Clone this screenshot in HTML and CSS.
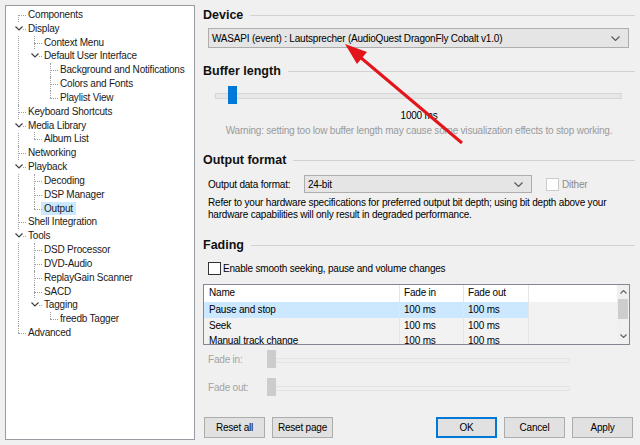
FILE: index.html
```html
<!DOCTYPE html>
<html lang="en">
<head>
    <meta charset="UTF-8">
    <meta name="viewport" content="width=device-width, initial-scale=1.0">
    <title>Preferences: Output</title>
    <link rel="stylesheet" href="styles.css">
</head>
<body>
    <div class="window">
        <div class="tree-box">
            <ul class="tree">
                <li><span class="label">Components</span></li>
                <li><span class="caret"><svg width="8" height="5" viewBox="0 0 8 5"><polyline points="0.5,0.5 4,4 7.5,0.5"/></svg></span><span class="label">Display</span>
                    <ul>
                        <li><span class="label">Context Menu</span></li>
                        <li><span class="caret"><svg width="8" height="5" viewBox="0 0 8 5"><polyline points="0.5,0.5 4,4 7.5,0.5"/></svg></span><span class="label">Default User Interface</span>
                            <ul>
                                <li><span class="label">Background and Notifications</span></li>
                                <li><span class="label">Colors and Fonts</span></li>
                                <li><span class="label">Playlist View</span></li>
                            </ul>
                        </li>
                    </ul>
                </li>
                <li><span class="label">Keyboard Shortcuts</span></li>
                <li><span class="caret"><svg width="8" height="5" viewBox="0 0 8 5"><polyline points="0.5,0.5 4,4 7.5,0.5"/></svg></span><span class="label">Media Library</span>
                    <ul>
                        <li><span class="label">Album List</span></li>
                    </ul>
                </li>
                <li><span class="label">Networking</span></li>
                <li><span class="caret"><svg width="8" height="5" viewBox="0 0 8 5"><polyline points="0.5,0.5 4,4 7.5,0.5"/></svg></span><span class="label">Playback</span>
                    <ul>
                        <li><span class="label">Decoding</span></li>
                        <li><span class="label">DSP Manager</span></li>
                        <li><span class="label selected">Output</span></li>
                    </ul>
                </li>
                <li><span class="label">Shell Integration</span></li>
                <li><span class="caret"><svg width="8" height="5" viewBox="0 0 8 5"><polyline points="0.5,0.5 4,4 7.5,0.5"/></svg></span><span class="label">Tools</span>
                    <ul>
                        <li><span class="label">DSD Processor</span></li>
                        <li><span class="label">DVD-Audio</span></li>
                        <li><span class="label">ReplayGain Scanner</span></li>
                        <li><span class="label">SACD</span></li>
                        <li><span class="caret"><svg width="8" height="5" viewBox="0 0 8 5"><polyline points="0.5,0.5 4,4 7.5,0.5"/></svg></span><span class="label">Tagging</span>
                            <ul>
                                <li><span class="label">freedb Tagger</span></li>
                            </ul>
                        </li>
                    </ul>
                </li>
                <li><span class="label">Advanced</span></li>
            </ul>
        </div>

        <div class="pane">
            <h2 class="heading">Device</h2>
            <div class="combo device-combo">
                <span class="combo-text">WASAPI (event) : Lautsprecher (AudioQuest DragonFly Cobalt v1.0)</span>
                <svg class="chev" width="9" height="5" viewBox="0 0 9 5"><polyline points="0.5,0.5 4.5,4.5 8.5,0.5"/></svg>
            </div>

            <h2 class="heading buffer-heading">Buffer length</h2>
            <div class="slider buffer-slider">
                <div class="thumb"></div>
            </div>
            <p class="buffer-value">1000 ms</p>
            <p class="warning">Warning: setting too low buffer length may cause some visualization effects to stop working.</p>

            <h2 class="heading format-heading">Output format</h2>
            <div class="format-row">
                <span class="format-label">Output data format:</span>
                <div class="combo format-combo">
                    <span class="combo-text">24-bit</span>
                    <svg class="chev" width="9" height="5" viewBox="0 0 9 5"><polyline points="0.5,0.5 4.5,4.5 8.5,0.5"/></svg>
                </div>
                <span class="check disabled"></span>
                <span class="dither">Dither</span>
            </div>
            <p class="refer">Refer to your hardware specifications for preferred output bit depth; using bit depth above your hardware capabilities will only result in degraded performance.</p>

            <h2 class="heading fading-heading">Fading</h2>
            <div class="check-row">
                <span class="check"></span>
                <span>Enable smooth seeking, pause and volume changes</span>
            </div>

            <div class="list">
                <div class="list-body">
                    <div class="list-row list-head">
                        <span class="cell">Name</span>
                        <span class="cell">Fade in</span>
                        <span class="cell">Fade out</span>
                        <span class="cell rest"></span>
                    </div>
                    <div class="list-row active">
                        <span class="cell">Pause and stop</span>
                        <span class="cell">100 ms</span>
                        <span class="cell">100 ms</span>
                        <span class="cell rest"></span>
                    </div>
                    <div class="list-row">
                        <span class="cell">Seek</span>
                        <span class="cell">100 ms</span>
                        <span class="cell">100 ms</span>
                        <span class="cell rest"></span>
                    </div>
                    <div class="list-row">
                        <span class="cell">Manual track change</span>
                        <span class="cell">100 ms</span>
                        <span class="cell">100 ms</span>
                        <span class="cell rest"></span>
                    </div>
                </div>
                <div class="scrollbar">
                    <svg width="7" height="4" viewBox="0 0 7 4"><polyline points="0.5,3.5 3.5,0.5 6.5,3.5"/></svg>
                    <div class="scroll-thumb"></div>
                    <div class="scroll-space"></div>
                    <svg width="7" height="4" viewBox="0 0 7 4"><polyline points="0.5,0.5 3.5,3.5 6.5,0.5"/></svg>
                </div>
            </div>

            <div class="fade-row">
                <span class="fade-label">Fade in:</span>
                <div class="slider fade-slider"><div class="thumb"></div></div>
            </div>
            <div class="fade-row fade-out">
                <span class="fade-label">Fade out:</span>
                <div class="slider fade-slider"><div class="thumb"></div></div>
            </div>

            <div class="buttons">
                <button class="btn">Reset all</button>
                <button class="btn">Reset page</button>
                <span class="spacer"></span>
                <button class="btn default">OK</button>
                <button class="btn">Cancel</button>
                <button class="btn">Apply</button>
            </div>
        </div>

        <svg class="arrow" width="640" height="445" viewBox="0 0 640 445">
            <line x1="462" y1="143" x2="360" y2="57" />
            <polygon points="345,44 367,52 357,64" />
        </svg>
    </div>
</body>
</html>
```

FILE: styles.css
```css
* {
    box-sizing: border-box;
}
html, body {
    margin: 0;
    padding: 0;
}
body {
    background-color: #f0f0f0;
    font-family: "Liberation Sans", Arial, sans-serif;
    font-size: 10px;
    letter-spacing: -0.2px;
    color: #000;
}
.window {
    position: relative;
    display: flex;
    width: 640px;
    height: 445px;
    overflow: hidden;
}

/* tree on the left */
.tree-box {
    margin: 5px 0 0 5px;
    width: 190px;
    height: 435px;
    background-color: #fff;
    border: 1px solid #9a9aa2;
}
.tree, .tree ul {
    list-style: none;
    margin: 0;
    padding: 0;
}
.tree {
    padding-top: 2px;
}
.tree ul {
    margin-left: -6px;
}
.tree li {
    position: relative;
    padding-left: 22px;
    line-height: 13.83px;
}
.tree li::before {
    content: "";
    position: absolute;
    left: 12px;
    top: 0;
    bottom: 0;
    border-left: 1px dotted #a0a0a0;
}
.tree > li:first-child::before {
    top: 7px;
}
.tree li:last-child::before {
    bottom: auto;
    height: 7px;
}
.tree li::after {
    content: "";
    position: absolute;
    left: 12px;
    top: 7px;
    width: 8px;
    border-top: 1px dotted #a0a0a0;
}
.caret {
    position: absolute;
    left: 8px;
    top: 0;
    width: 9px;
    height: 13px;
    background-color: #fff;
    display: flex;
    align-items: center;
    justify-content: center;
    z-index: 1;
}
.caret svg polyline {
    fill: none;
    stroke: #404040;
    stroke-width: 1.2;
}
.label {
    display: inline-block;
    white-space: nowrap;
    color: #1a1a1a;
}
.label.selected {
    background-color: #cce8ff;
    padding: 0 3px;
    margin-left: -3px;
}

/* settings pane */
.pane {
    margin-left: 8px;
    width: 432px;
    padding-top: 6px;
}
.heading {
    display: flex;
    align-items: center;
    height: 18px;
    margin: 0;
    font-size: 12.5px;
    font-weight: bold;
    letter-spacing: 0;
    color: #111;
}
.heading::after {
    content: "";
    flex: 1;
    border-top: 1px solid #d2d2d2;
    margin-left: 7px;
}
.combo {
    display: flex;
    align-items: center;
    background-color: #e5e5e5;
    border: 1px solid #adadad;
    padding: 0 8px 0 3px;
}
.combo-text {
    flex: 1;
    white-space: nowrap;
}
.chev polyline {
    fill: none;
    stroke: #555;
    stroke-width: 1.1;
}
.device-combo {
    margin: 4px 6px 0 5px;
    height: 20px;
}
.buffer-heading {
    margin-top: 14px;
}
.slider {
    position: relative;
    height: 18px;
}
.slider::before {
    content: "";
    position: absolute;
    left: 0;
    right: 0;
    top: 7px;
    height: 4px;
    background-color: #e7e7e7;
    border: 1px solid #d6d6d6;
}
.thumb {
    position: absolute;
    top: 0;
    width: 9px;
    height: 18px;
    background-color: #0078d7;
}
.buffer-slider {
    margin: 6px 13px 0 12px;
}
.buffer-slider .thumb {
    left: 13px;
}
.buffer-value {
    margin: 6px 0 0;
    line-height: 12px;
    text-align: center;
}
.warning {
    margin: 3px 0 0;
    line-height: 12px;
    text-align: center;
    color: #9a9a9a;
}
.format-heading {
    margin-top: 14px;
}
.format-row {
    display: flex;
    align-items: center;
    margin: 6px 0 0 5px;
    height: 18px;
}
.format-label {
    width: 96px;
}
.format-combo {
    width: 228px;
    height: 18px;
}
.check {
    display: inline-block;
    width: 13px;
    height: 13px;
    background-color: #fff;
    border: 1px solid #333;
}
.check.disabled {
    margin-left: 14px;
    border-color: #cccccc;
}
.dither {
    margin-left: 3px;
    color: #8c8c8c;
}
.refer {
    margin: 4px 0 0 5px;
    line-height: 12px;
}
.fading-heading {
    margin-top: 15px;
}
.check-row {
    display: flex;
    align-items: center;
    gap: 2px;
    height: 14px;
    margin: 7px 0 0 5px;
}

/* fade list */
.list {
    display: flex;
    margin: 9px 5px 0 0;
    height: 61px;
    border: 1px solid #828790;
    background-color: #f2f2f2;
    overflow: hidden;
}
.list-body {
    flex: 1;
}
.list-row {
    display: grid;
    grid-template-columns: 196px 64px 65px 1fr;
    height: 15.5px;
    line-height: 15.5px;
}
.list-head {
    height: 17px;
    line-height: 16px;
    background-color: #fff;
}
.cell {
    padding-left: 5px;
    border-right: 1px solid #e5e5e5;
    white-space: nowrap;
}
.cell + .cell {
    padding-left: 4px;
}
.cell.rest {
    border-right: none;
}
.list-row.active .cell:not(.rest) {
    background-color: #cce8ff;
}
.scrollbar {
    width: 12px;
    display: flex;
    flex-direction: column;
    align-items: center;
    padding: 5px 0 6px;
    background-color: #f0f0f0;
}
.scrollbar polyline {
    fill: none;
    stroke: #606060;
    stroke-width: 1.1;
}
.scroll-thumb {
    width: 10px;
    height: 20px;
    margin-top: 5px;
    background-color: #cdcdcd;
}
.scroll-space {
    flex: 1;
}
.fade-row {
    display: flex;
    align-items: center;
    height: 18px;
    margin: 5px 0 0 5px;
}
.fade-out {
    margin-top: 10px;
}
.fade-label {
    width: 59px;
    color: #a3a3a3;
}
.fade-slider {
    width: 303px;
}
.fade-slider::before {
    background-color: #efefef;
    border-color: #e3e3e3;
    height: 3px;
    top: 8px;
}
.fade-slider .thumb {
    left: 0;
    background-color: #cccccc;
}

/* bottom buttons */
.buttons {
    display: flex;
    gap: 7px;
    margin: 21px 2px 0 1px;
}
.spacer {
    flex: 1;
}
.btn {
    width: 61px;
    height: 21px;
    padding: 0;
    background-color: #e1e1e1;
    border: 1px solid #adadad;
    font-family: "Liberation Sans", Arial, sans-serif;
    font-size: 10px;
    letter-spacing: -0.2px;
    color: #000;
}
.btn.default {
    border: 2px solid #0078d7;
}

/* annotation arrow */
.arrow {
    position: absolute;
    left: 0;
    top: 0;
    pointer-events: none;
}
.arrow line {
    stroke: #e4141b;
    stroke-width: 3;
}
.arrow polygon {
    fill: #e4141b;
}
```
